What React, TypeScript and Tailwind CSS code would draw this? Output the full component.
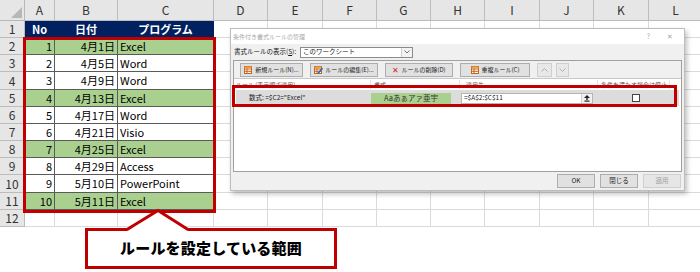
import React from "react";

type SheetRow = {
  no?: string;
  date?: string;
  prog?: string;
  green?: boolean;
  head?: boolean;
};

const COLUMNS = ["A", "B", "C", "D", "E", "F", "G", "H", "I", "J", "K", "L"];

const ROWS: SheetRow[] = [
  { head: true, no: "No", date: "日付", prog: "プログラム" },
  { no: "1", date: "4月1日", prog: "Excel", green: true },
  { no: "2", date: "4月5日", prog: "Word" },
  { no: "3", date: "4月9日", prog: "Word" },
  { no: "4", date: "4月13日", prog: "Excel", green: true },
  { no: "5", date: "4月17日", prog: "Word" },
  { no: "6", date: "4月21日", prog: "Visio" },
  { no: "7", date: "4月25日", prog: "Excel", green: true },
  { no: "8", date: "4月29日", prog: "Access" },
  { no: "9", date: "5月10日", prog: "PowerPoint" },
  { no: "10", date: "5月11日", prog: "Excel", green: true },
  {},
];

// small toolbar icons
const GridIcon = ({ pencil }: { pencil?: boolean }) => (
  <svg width="9" height="8" viewBox="0 0 9 8">
    <rect x="0.5" y="0.5" width="7" height="7" fill="#fff" stroke="#c0651b" />
    <line x1="0.5" y1="3" x2="7.5" y2="3" stroke="#c0651b" />
    <line x1="0.5" y1="5.3" x2="7.5" y2="5.3" stroke="#c0651b" />
    <line x1="3" y1="0.5" x2="3" y2="7.5" stroke="#c0651b" />
    <rect x="0.5" y="0.5" width="7" height="2" fill="#f0a050" />
    {pencil && (
      <line x1="4" y1="7.5" x2="8.5" y2="2" stroke="#2b6cc4" strokeWidth="1.6" />
    )}
  </svg>
);

const ToolButton = ({
  width,
  icon,
  label,
}: {
  width: string;
  icon: React.ReactNode;
  label: string;
}) => (
  <div
    className={`${width} h-[14px] flex items-center justify-center gap-[2px] border border-[#adadad] bg-[#e1e1e1] text-[6px] text-[#222]`}
  >
    {icon}
    <span>{label}</span>
  </div>
);

const Sheet = () => (
  <div className="grid grid-cols-[25px_30px_63px_96px_54px_55px_54px_54px_54px_55px_54px_55px_54px] grid-rows-[21px_17px_17px_17px_18px_17px_17px_17px_17px_17px_18px_17px_17px] w-[703px]">
    {/* header row */}
    <div className="relative bg-[#e6e6e6] border-r border-b border-[#b8b8b8]">
      <svg
        className="absolute right-[2px] bottom-[2px]"
        width="11"
        height="11"
        viewBox="0 0 11 11"
      >
        <polygon points="11,0 11,11 0,11" fill="#b7b7b7" />
      </svg>
    </div>
    {COLUMNS.map((c) => (
      <div
        key={c}
        className="flex items-center justify-center bg-[#e6e6e6] border-r border-b border-[#bcbcbc] text-[12px] text-[#333]"
      >
        {c}
      </div>
    ))}

    {ROWS.map((row, i) => {
      const inTable = i <= 10;
      const cellBase = row.head
        ? "bg-[#002060] text-white font-bold justify-center border-r border-b border-[#002060]"
        : row.green
          ? "bg-[#a9d08e] text-black border-r border-b border-[#5a5a5a]"
          : "bg-white text-black border-r border-b border-[#5a5a5a]";
      return (
        <React.Fragment key={i}>
          <div className="flex items-center justify-center bg-[#e6e6e6] border-r border-b border-[#bcbcbc] text-[12px] text-[#333]">
            {i + 1}
          </div>
          {inTable ? (
            <>
              <div
                className={`flex items-center text-[11px] ${cellBase} ${row.head ? "" : "justify-end pr-[2px]"}`}
              >
                {row.no}
              </div>
              <div
                className={`flex items-center text-[11px] ${cellBase} ${row.head ? "" : "justify-end pr-[2px]"}`}
              >
                {row.date}
              </div>
              <div
                className={`flex items-center text-[11px] ${cellBase} ${row.head ? "" : "pl-[2px]"}`}
              >
                {row.prog}
              </div>
            </>
          ) : (
            <>
              <div className="border-r border-b border-[#dadada]" />
              <div className="border-r border-b border-[#dadada]" />
              <div className="border-r border-b border-[#dadada]" />
            </>
          )}
          {COLUMNS.slice(3).map((c) => (
            <div key={c} className="border-r border-b border-[#dadada]" />
          ))}
        </React.Fragment>
      );
    })}
  </div>
);

const RuleDialog = () => (
  <div className="absolute left-[230px] top-[28px] w-[455px] h-[163px] flex flex-col whitespace-nowrap bg-[#f0f0f0] border border-[#bdbdbd] shadow-[2px_3px_5px_rgba(0,0,0,0.25)]">
    {/* title bar */}
    <div className="h-[15px] flex items-center justify-between bg-white pl-[2px] pr-[11px] text-[6px] text-[#a8a8a8]">
      <span>条件付き書式ルールの管理</span>
      <div className="flex items-center gap-[17px] text-[7px]">
        <span>?</span>
        <span>✕</span>
      </div>
    </div>

    {/* scope select */}
    <div className="h-[16px] flex items-center pl-[3px] text-[6.5px] text-[#111]">
      <span className="w-[66px]">
        書式ルールの表示(<span className="underline">S</span>):
      </span>
      <div className="w-[113px] h-[11px] flex items-center bg-white border border-[#8c8c8c]">
        <span className="flex-1 pl-[2px]">このワークシート</span>
        <div className="w-[11px] h-full flex items-center justify-center border-l border-[#cfcfcf] bg-[#f3f3f3]">
          <svg width="6" height="4" viewBox="0 0 6 4">
            <polyline points="0.5,0.5 3,3 5.5,0.5" fill="none" stroke="#777" />
          </svg>
        </div>
      </div>
    </div>

    {/* rule panel */}
    <div className="mx-[2px] h-[112px] flex flex-col border border-[#a0a0a0]">
      <div className="h-[18px] flex items-center gap-[7px] pl-[6px] border-b border-[#c8c8c8] bg-[#f0f0f0]">
        <ToolButton width="w-[63px]" icon={<GridIcon />} label="新規ルール(N)..." />
        <ToolButton
          width="w-[68px]"
          icon={<GridIcon pencil />}
          label="ルールの編集(E)..."
        />
        <ToolButton
          width="w-[68px]"
          icon={<span className="text-[#d21f1f] text-[8px] leading-none">✕</span>}
          label="ルールの削除(D)"
        />
        <ToolButton width="w-[70px]" icon={<GridIcon />} label="重複ルール(C)" />
        <div className="flex gap-[4px]">
          <div className="w-[15px] h-[14px] flex items-center justify-center border border-[#cfcfcf] bg-[#e8e8e8]">
            <svg width="7" height="4" viewBox="0 0 7 4">
              <polyline points="0.5,3.5 3.5,0.5 6.5,3.5" fill="none" stroke="#b0b0b0" />
            </svg>
          </div>
          <div className="w-[13px] h-[14px] flex items-center justify-center border border-[#cfcfcf] bg-[#e8e8e8]">
            <svg width="7" height="4" viewBox="0 0 7 4">
              <polyline points="0.5,0.5 3.5,3.5 6.5,0.5" fill="none" stroke="#b0b0b0" />
            </svg>
          </div>
        </div>
      </div>

      <div className="flex-1 bg-white flex flex-col">
        <div className="h-[10px] flex items-center text-[6px] text-[#555]">
          <span className="w-[137px] pl-[2px] border-r border-[#e3e3e3]">
            ルール (表示順で適用)
          </span>
          <span className="w-[89px] pl-[3px] border-r border-[#e3e3e3]">書式</span>
          <span className="w-[138px] pl-[6px] border-r border-[#e3e3e3]">適用先</span>
          <span className="w-[72px] pl-[3px] border-r border-[#e3e3e3]">
            条件を満たす場合は停止
          </span>
        </div>
        <div className="mt-[1px] mx-[2px] h-[16px] flex items-center bg-[#dcdcdc] text-[6.5px] text-[#222]">
          <span className="w-[135px] pl-[13px]">数式: =$C2="Excel"</span>
          <div className="w-[80px] h-[11px] flex items-center justify-center bg-[#a9d08e] text-[7.5px] text-[#333]">
            Aaあぁアァ亜宇
          </div>
          <div className="ml-[10px] w-[132px] h-[11px] flex items-center bg-white border border-[#b5b5b5]">
            <span className="flex-1 pl-[2px]">=$A$2:$C$11</span>
            <div className="w-[11px] h-full flex items-center justify-center border-l border-[#d0d0d0] bg-[#f0f0f0]">
              <svg width="6" height="7" viewBox="0 0 6 7">
                <polygon points="3,0 6,3 0,3" fill="#222" />
                <rect x="2.3" y="2.5" width="1.4" height="2.5" fill="#222" />
                <rect x="0.5" y="5.5" width="5" height="1.2" fill="#222" />
              </svg>
            </div>
          </div>
          <div className="ml-[39px] w-[8px] h-[8px] bg-white border border-[#444]" />
        </div>
      </div>
    </div>

    {/* footer buttons */}
    <div className="flex-1 flex items-center justify-end gap-[5px] pr-[3px] text-[6.5px]">
      <div className="w-[38px] h-[14px] flex items-center justify-center border border-[#adadad] bg-[#e1e1e1] text-[#222]">
        OK
      </div>
      <div className="w-[38px] h-[14px] flex items-center justify-center border border-[#adadad] bg-[#e1e1e1] text-[#222]">
        閉じる
      </div>
      <div className="w-[38px] h-[14px] flex items-center justify-center border border-[#cfcfcf] bg-[#e6e6e6] text-[#a0a0a0]">
        適用
      </div>
    </div>
  </div>
);

const Callout = () => (
  <>
    <div className="absolute left-[85px] top-[228px] w-[252px] h-[41px] flex items-center justify-center border-[3px] border-[#c00000] bg-white">
      <span className="text-[15px] font-black text-black tracking-[0.2px]">
        ルールを設定している範囲
      </span>
    </div>
    <svg
      className="absolute left-[120px] top-[205px]"
      width="76"
      height="28"
      viewBox="0 0 76 28"
    >
      <polygon points="7,26 38,6 68,26" fill="#fff" />
      <polyline
        points="7,24.5 38,5.5 68,24.5"
        fill="none"
        stroke="#c00000"
        strokeWidth="3"
        strokeLinejoin="miter"
      />
    </svg>
  </>
);

export default function App() {
  return (
    <div className="relative w-[700px] h-[272px] overflow-hidden bg-white font-['Noto_Sans_CJK_JP','Noto_Sans',sans-serif]">
      <Sheet />
      <RuleDialog />
      {/* range highlight on the dialog rule row */}
      <div className="absolute left-[232px] top-[85px] w-[445px] h-[22px] border-[3px] border-[#c00000]" />
      {/* range highlight on the sheet */}
      <div className="absolute left-[23px] top-[37px] w-[193px] h-[176px] border-[3px] border-[#c00000]" />
      <Callout />
    </div>
  );
}
